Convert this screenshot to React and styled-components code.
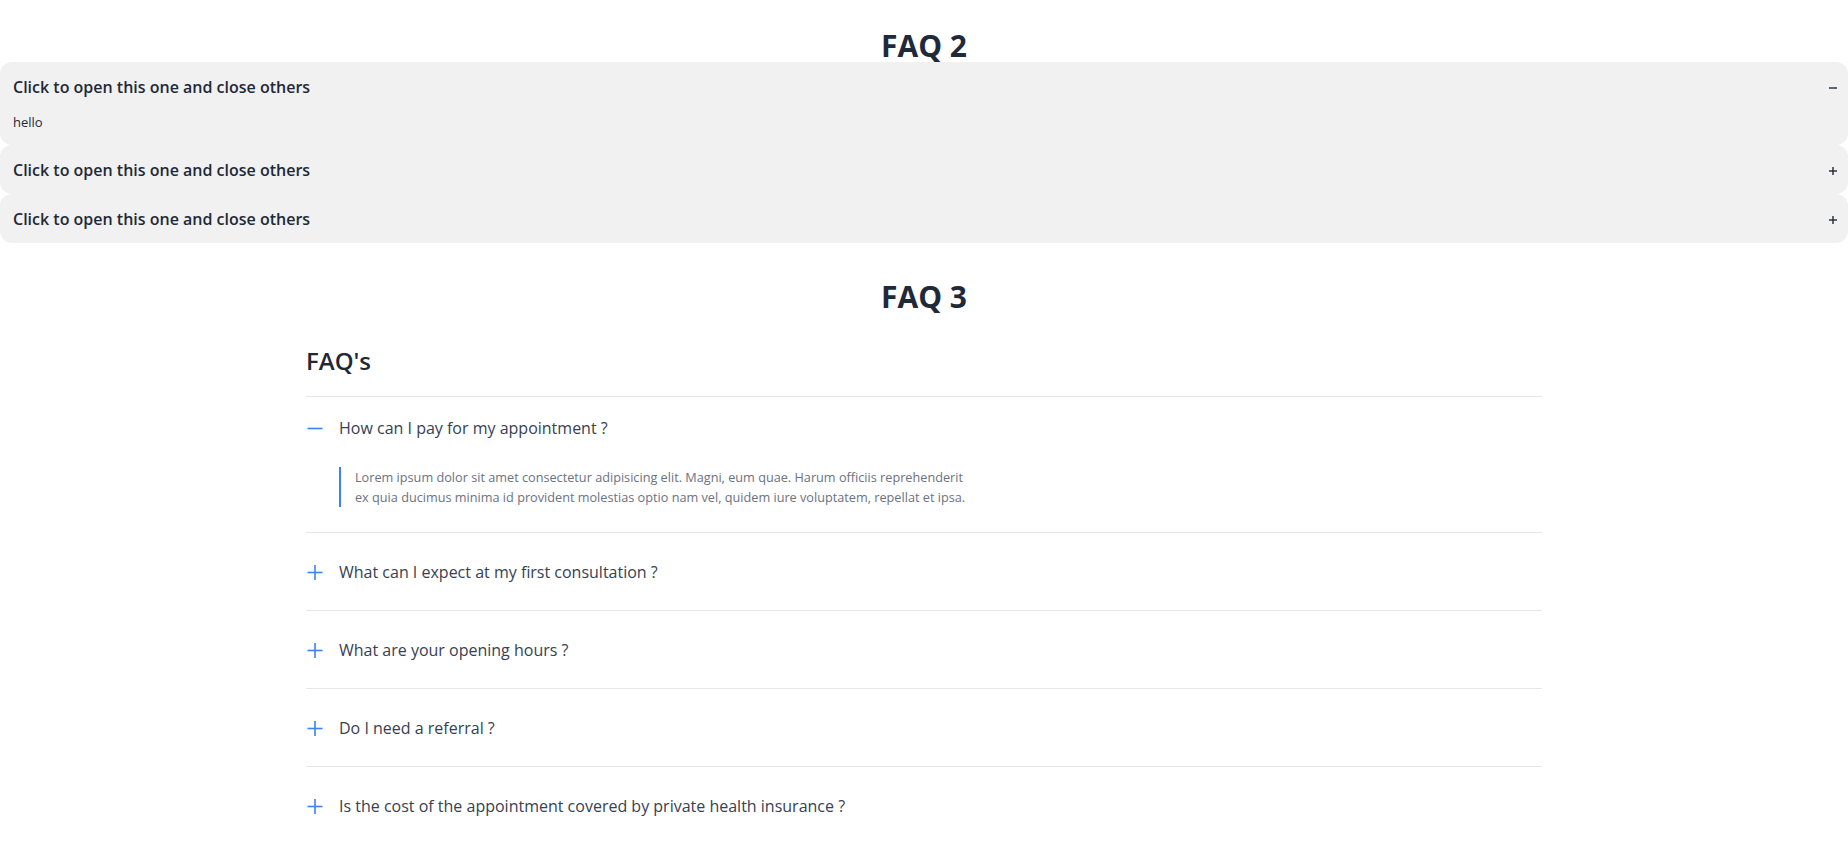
import React, { useState } from "react";
import styled, { createGlobalStyle } from "styled-components";

const GlobalStyle = createGlobalStyle`
  body {
    margin: 0;
    font-family: "Open Sans", "Noto Sans", sans-serif;
    color: #1f2937;
    background: #ffffff;
  }
`;

const simpleItems = [
  { title: "Click to open this one and close others", body: "hello" },
  { title: "Click to open this one and close others", body: "hello" },
  { title: "Click to open this one and close others", body: "hello" },
];

const lorem =
  "Lorem ipsum dolor sit amet consectetur adipisicing elit. Magni, eum quae. Harum officiis reprehenderit ex quia ducimus minima id provident molestias optio nam vel, quidem iure voluptatem, repellat et ipsa.";

const faqs = [
  { q: "How can I pay for my appointment ?", a: lorem },
  { q: "What can I expect at my first consultation ?", a: lorem },
  { q: "What are your opening hours ?", a: lorem },
  { q: "Do I need a referral ?", a: lorem },
  { q: "Is the cost of the appointment covered by private health insurance ?", a: lorem },
];

function SmallSign({ open }) {
  return (
    <svg width="8" height="8" viewBox="0 0 8 8">
      <line x1="0" y1="4" x2="8" y2="4" stroke="#1f2937" strokeWidth="1.4" />
      {!open && (
        <line x1="4" y1="0" x2="4" y2="8" stroke="#1f2937" strokeWidth="1.4" />
      )}
    </svg>
  );
}

function BlueSign({ open }) {
  return (
    <svg width="17" height="17" viewBox="0 0 17 17">
      <line x1="1.5" y1="8.5" x2="16.5" y2="8.5" stroke="#3b82f6" strokeWidth="1.6" />
      {!open && (
        <line x1="9" y1="1" x2="9" y2="16" stroke="#3b82f6" strokeWidth="1.6" />
      )}
    </svg>
  );
}

export default function App() {
  const [openSimple, setOpenSimple] = useState(0);
  const [openFaq, setOpenFaq] = useState(0);

  return (
    <Page>
      <GlobalStyle />
      <Section>
        <Title>FAQ 2</Title>
        <div>
          {simpleItems.map((item, i) => (
            <Item key={i}>
              <ItemHead onClick={() => setOpenSimple(openSimple === i ? -1 : i)}>
                <span>{item.title}</span>
                <SmallSign open={openSimple === i} />
              </ItemHead>
              {openSimple === i && <ItemBody>{item.body}</ItemBody>}
            </Item>
          ))}
        </div>
      </Section>

      <Section second>
        <Title>FAQ 3</Title>
        <FaqBox>
          <FaqHeading>FAQ's</FaqHeading>
          {faqs.map((f, i) => (
            <FaqItem key={i} open={openFaq === i}>
              <Question onClick={() => setOpenFaq(openFaq === i ? -1 : i)}>
                <BlueSign open={openFaq === i} />
                <span>{f.q}</span>
              </Question>
              {openFaq === i && <Answer>{f.a}</Answer>}
            </FaqItem>
          ))}
        </FaqBox>
      </Section>
    </Page>
  );
}

const Page = styled.div`
  padding-top: 29px;
  padding-bottom: 40px;
`;

const Section = styled.section`
  margin-top: ${(p) => (p.second ? "37px" : "0")};
`;

const Title = styled.h2`
  margin: 0;
  text-align: center;
  font-size: 30px;
  line-height: 33px;
  font-weight: 700;
  color: #1e293b;
`;

const Item = styled.div`
  position: relative;
  background: #f1f1f1;
  border-radius: 12px;
`;

const ItemHead = styled.div`
  display: flex;
  align-items: center;
  justify-content: space-between;
  padding: 13px 11px 11px 13px;
  line-height: 25px;
  font-size: 16px;
  font-weight: 600;
  color: #1f2937;
  cursor: pointer;
`;

const ItemBody = styled.div`
  padding: 0 13px 12px;
  font-size: 13px;
  line-height: 22px;
  color: #1f2937;
`;

const FaqBox = styled.div`
  max-width: 1236px;
  margin: 0 auto;
`;

const FaqHeading = styled.h3`
  margin: 32px 0 0;
  padding-bottom: 19px;
  font-size: 24px;
  line-height: 32px;
  font-weight: 600;
  color: #1f2937;
`;

const FaqItem = styled.div`
  border-top: 1px solid #e5e7eb;
  padding: ${(p) => (p.open ? "16px 0 25px" : "24px 0 23px")};
`;

const Question = styled.div`
  display: flex;
  align-items: center;
  gap: 16px;
  height: 30px;
  font-size: 16px;
  color: #374151;
  cursor: pointer;
`;

const Answer = styled.p`
  margin: 24px 0 0 33px;
  max-width: 616px;
  border-left: 2px solid #3b82f6;
  padding-left: 14px;
  font-size: 12.7px;
  line-height: 20px;
  color: #6b7280;
`;
